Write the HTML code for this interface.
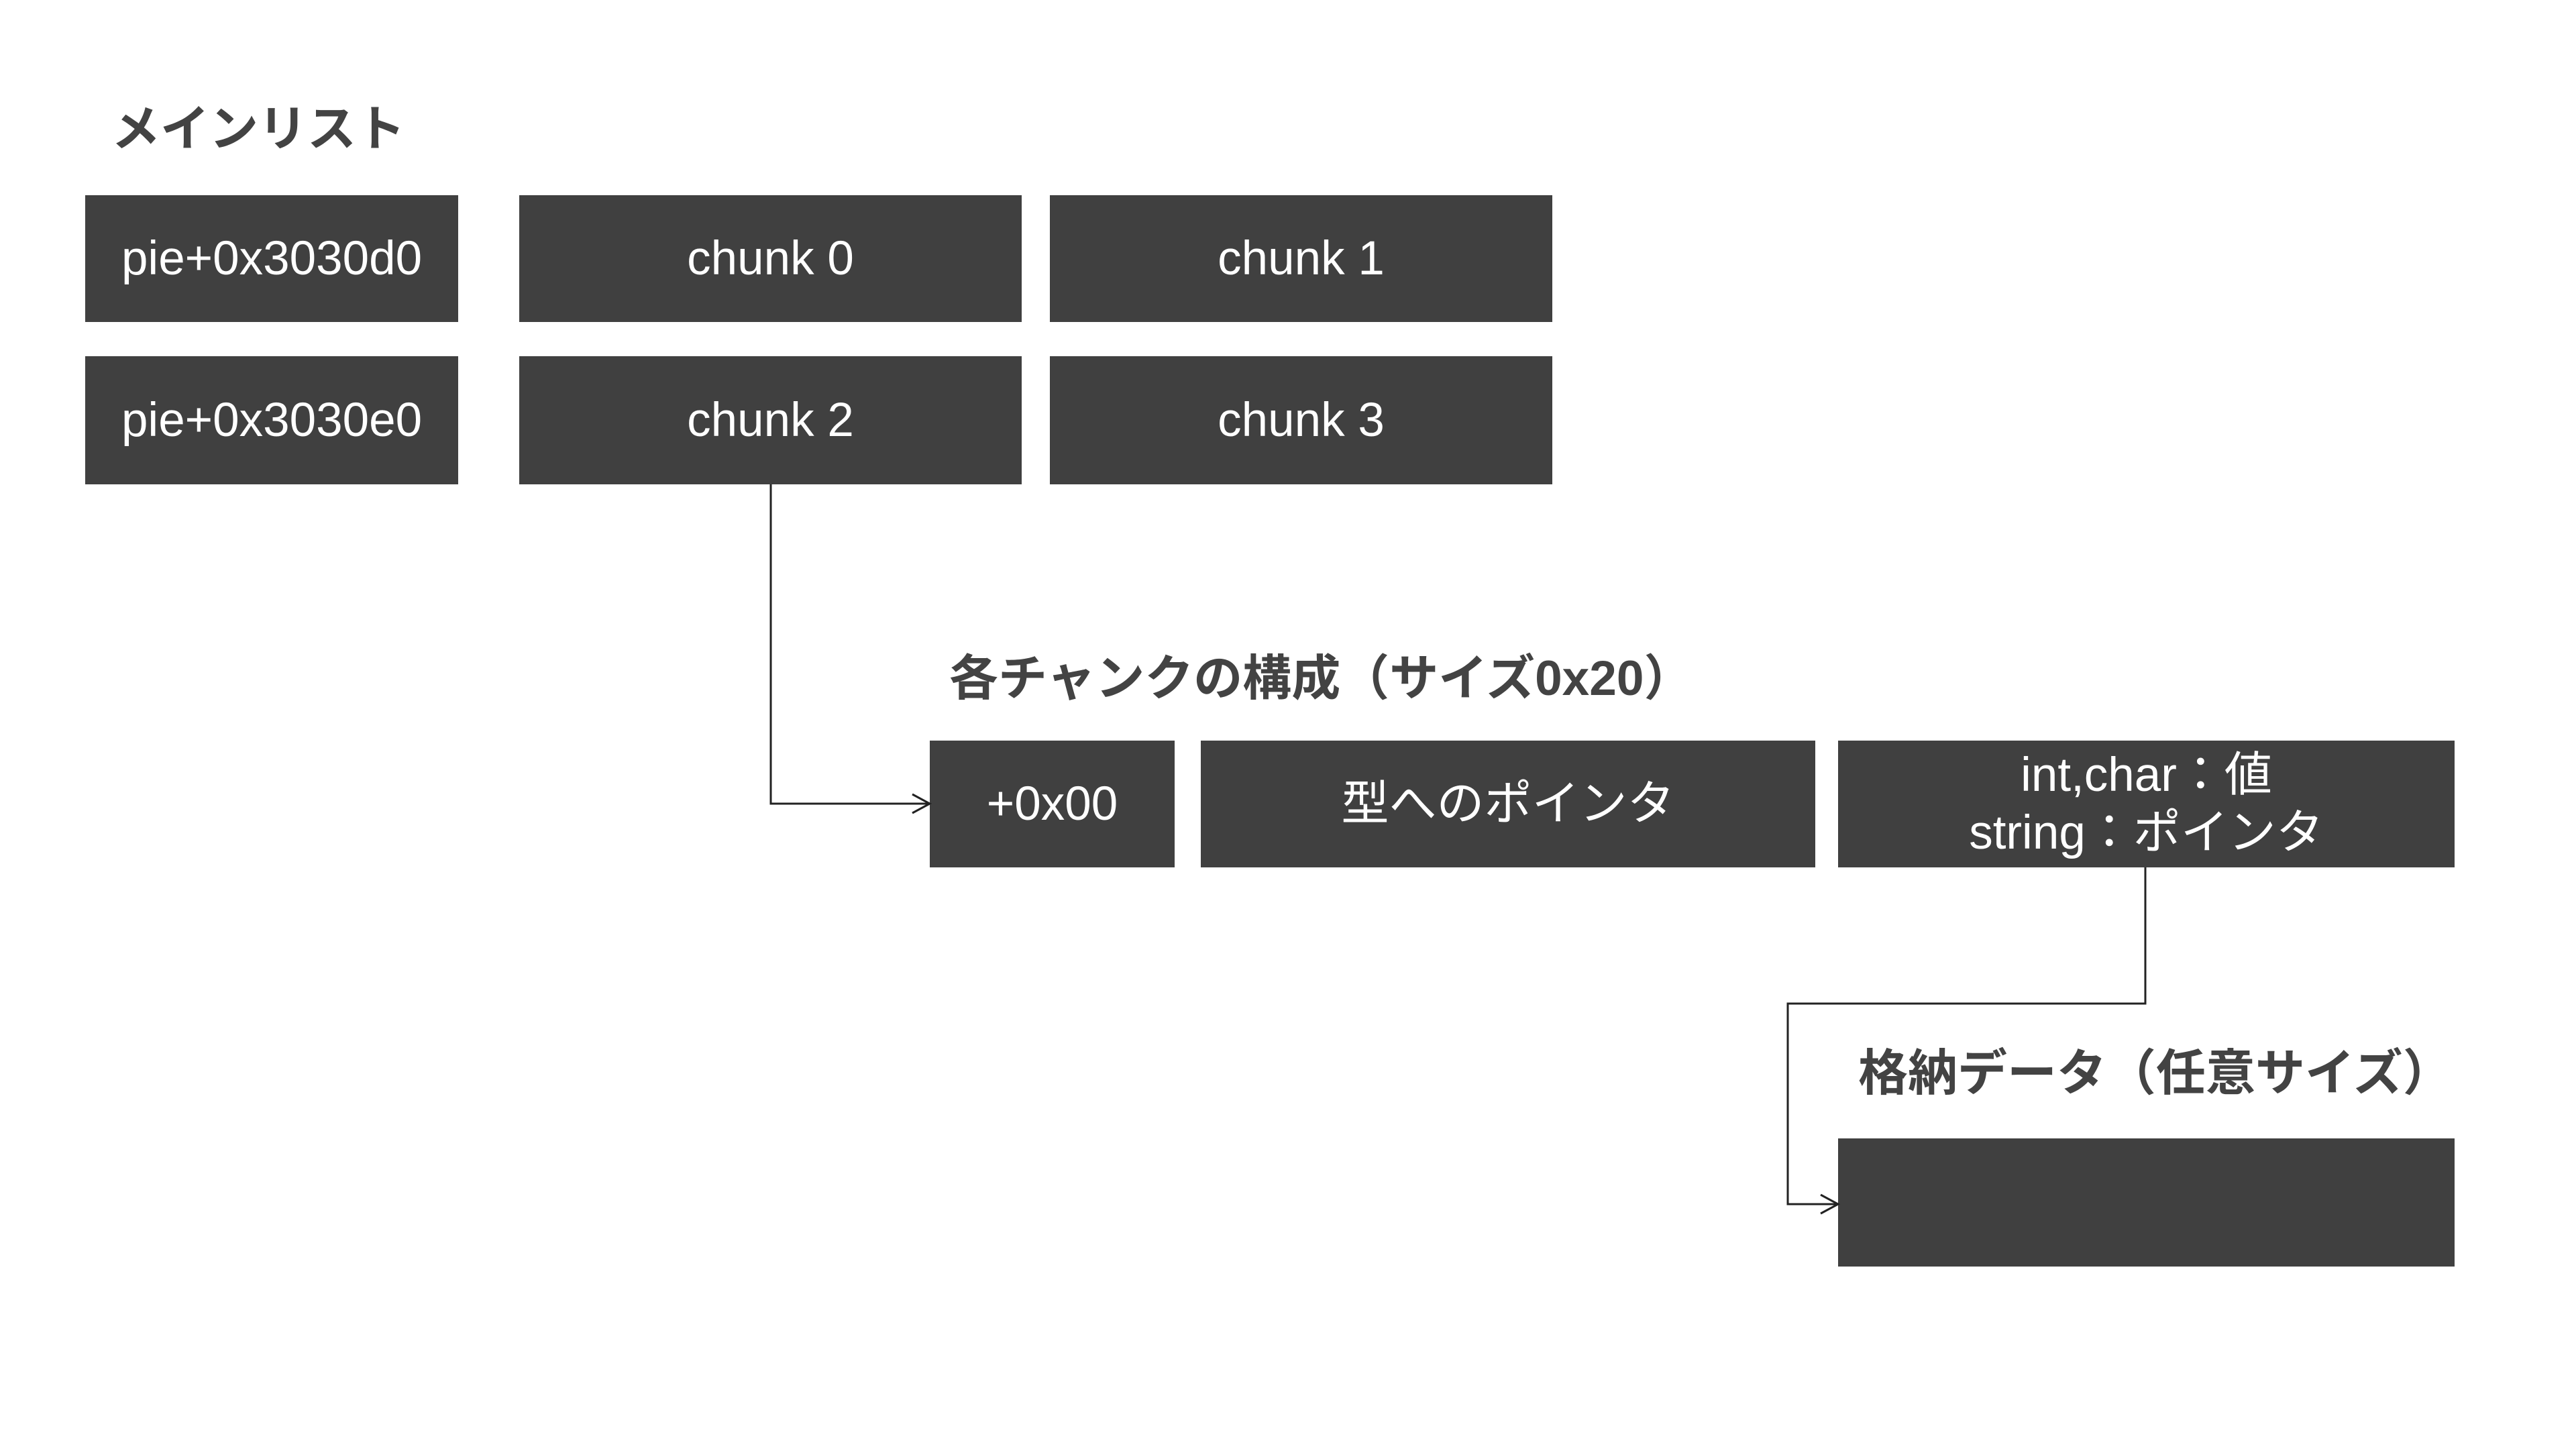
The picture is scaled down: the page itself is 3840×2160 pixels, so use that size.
<!DOCTYPE html>
<html><head><meta charset="utf-8"><style>
body{margin:0;width:3840px;height:2160px;background:#fff;position:relative;overflow:hidden;font-family:"Liberation Sans","Noto Sans CJK JP",sans-serif}
.b{position:absolute;background:#404040;color:#fff;font-size:71px;display:flex;align-items:center;justify-content:center;text-align:center;line-height:86px}
.h{position:absolute;color:#434343;font-weight:bold;white-space:nowrap;line-height:1}
</style></head><body>
<div class="h" style="left:166px;top:156px;font-size:73px">メインリスト</div>
<div class="b" style="left:127px;top:291px;width:556px;height:189px">pie+0x3030d0</div>
<div class="b" style="left:774px;top:291px;width:749px;height:189px">chunk 0</div>
<div class="b" style="left:1565px;top:291px;width:749px;height:189px">chunk 1</div>
<div class="b" style="left:127px;top:531px;width:556px;height:191px">pie+0x3030e0</div>
<div class="b" style="left:774px;top:531px;width:749px;height:191px">chunk 2</div>
<div class="b" style="left:1565px;top:531px;width:749px;height:191px">chunk 3</div>
<div class="h" style="left:1415px;top:975px;font-size:73px">各チャンクの構成（サイズ0x20）</div>
<div class="b" style="left:1386px;top:1104px;width:365px;height:189px">+0x00</div>
<div class="b" style="left:1790px;top:1104px;width:916px;height:189px">型へのポインタ</div>
<div class="b" style="left:2740px;top:1104px;width:919px;height:189px">int,char：値<br>string：ポインタ</div>
<div class="h" style="left:2770px;top:1563px;font-size:74px">格納データ（任意サイズ）</div>
<div class="b" style="left:2740px;top:1697px;width:919px;height:191px"></div>
<svg width="3840" height="2160" style="position:absolute;left:0;top:0" fill="none" stroke="#222" stroke-width="3">
<path d="M1149 722V1198H1384M1360 1184L1386 1198L1360 1212"/>
<path d="M3198 1293V1496H2665V1795H2738M2714 1781L2740 1795L2714 1809"/>
</svg>
</body></html>
